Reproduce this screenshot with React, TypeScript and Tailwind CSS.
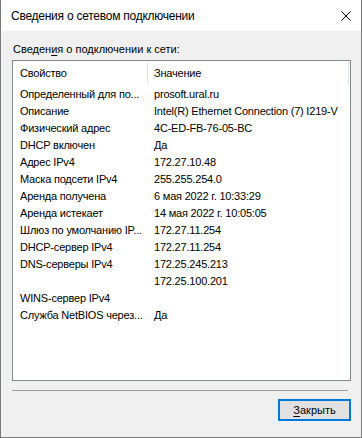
import React from "react";

const rows: [string, string][] = [
  ["Определенный для по...", "prosoft.ural.ru"],
  ["Описание", "Intel(R) Ethernet Connection (7) I219-V"],
  ["Физический адрес", "4C-ED-FB-76-05-BC"],
  ["DHCP включен", "Да"],
  ["Адрес IPv4", "172.27.10.48"],
  ["Маска подсети IPv4", "255.255.254.0"],
  ["Аренда получена", "6 мая 2022 г. 10:33:29"],
  ["Аренда истекает", "14 мая 2022 г. 10:05:05"],
  ["Шлюз по умолчанию IP...", "172.27.11.254"],
  ["DHCP-сервер IPv4", "172.27.11.254"],
  ["DNS-серверы IPv4", "172.25.245.213"],
  ["", "172.25.100.201"],
  ["WINS-сервер IPv4", ""],
  ["Служба NetBIOS через...", "Да"],
];

export default function App() {
  return (
    <div
      className="w-[362px] h-[438px] flex flex-col bg-[#f0f0f0] border-l border-r border-b border-[#7a7a7a] text-black text-[11px] leading-none overflow-hidden"
      style={{ fontFamily: '"Liberation Sans", Arial, sans-serif' }}
    >
      <div className="h-[31px] bg-white flex items-center justify-between pl-[10px] pr-[10px] shrink-0">
        <span className="text-[12px] tracking-[-0.25px]">Сведения о сетевом подключении</span>
        <svg width="10" height="10" viewBox="0 0 10 10" className="block">
          <path d="M0.5 0.5 L9.5 9.5 M9.5 0.5 L0.5 9.5" stroke="#000" strokeWidth="1" fill="none" />
        </svg>
      </div>
      <div className="flex flex-col px-[11px] pt-[12px]">
        <div className="h-[12px] flex items-center pl-px mb-[5px]">
          Сведен<span className="underline underline-offset-2">и</span>я о подключении к сети:
        </div>
        <div className="w-[339px] h-[321px] border border-[#828790] bg-white flex flex-col tracking-[-0.2px]">
          <div className="h-[25px] flex items-stretch shrink-0">
            <div className="w-[134px] pl-[7px] flex items-center">Свойство</div>
            <div className="w-px bg-[#e5e5e5] my-[1px]" />
            <div className="w-[200px] pl-[6px] flex items-center">Значение</div>
            <div className="w-px bg-[#e5e5e5] my-[1px]" />
          </div>
          {rows.map(([k, v], i) => (
            <div key={i} className="h-[17px] flex items-center shrink-0">
              <div className="w-[135px] pl-[7px] whitespace-nowrap overflow-hidden">{k}</div>
              <div className="pl-[6px] whitespace-nowrap">{v}</div>
            </div>
          ))}
        </div>
        <div className="mt-[9px] w-[336px] h-px bg-[#a0a0a0]" />
        <div className="flex justify-end mt-[8px]">
          <button className="w-[73px] h-[22px] border-2 border-[#0078d7] bg-[#e1e1e1] flex items-center justify-center mr-[-1px]">
            <span>
              <span className="underline underline-offset-2">З</span>акрыть
            </span>
          </button>
        </div>
      </div>
    </div>
  );
}
